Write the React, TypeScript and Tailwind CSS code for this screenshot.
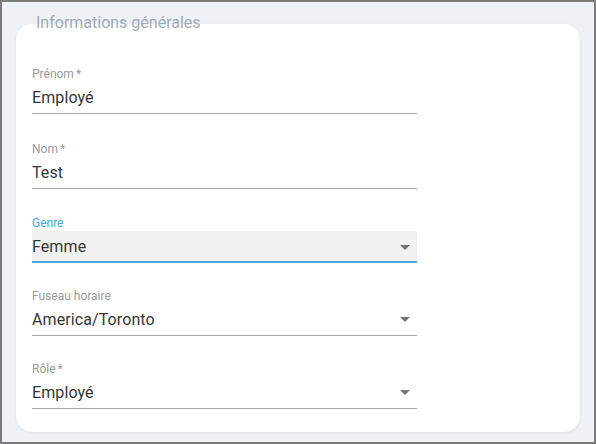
import { ReactNode } from "react";

function Arrow() {
  return (
    <svg width="10" height="5" viewBox="0 0 10 5" className="shrink-0">
      <path d="M0 0 L10 0 L5 5 Z" fill="#757575" />
    </svg>
  );
}

interface FieldProps {
  label: string;
  value: string;
  required?: boolean;
  select?: boolean;
  focused?: boolean;
  className?: string;
}

function Field({ label, value, required, select, focused, className }: FieldProps) {
  return (
    <div className={`w-[385px] ${className ?? ""}`}>
      <div
        className={`h-4 text-[12px] leading-4 ${
          focused ? "text-[#3fa9e5]" : "text-[#9a9a9a]"
        }`}
      >
        {label}
        {required && <span className="ml-[2px]">*</span>}
      </div>
      <div
        className={`flex h-[32px] items-center justify-between ${
          focused
            ? "border-b-2 border-[#45a8e2] bg-[#f1f1f1] pt-[2px]"
            : "border-b border-[#a8a8a8]"
        }`}
      >
        <span className="text-[16px] leading-5 tracking-[0.1px] text-[#363636]">{value}</span>
        {select && (
          <span className="mr-[7px]">
            <Arrow />
          </span>
        )}
      </div>
    </div>
  );
}

function Card({ title, children }: { title: string; children: ReactNode }) {
  return (
    <div className="relative h-full rounded-2xl bg-white pl-4 pt-[42px] shadow-[0_1px_3px_rgba(0,0,0,0.08)]">
      <div className="absolute left-5 top-[-11px] text-[16px] leading-5 text-[#a2acb8]">
        {title}
      </div>
      {children}
    </div>
  );
}

export default function App() {
  return (
    <div
      className="h-[444px] w-[596px] border-2 border-[#7b7b7b] bg-[#eef1f6] pb-[10px] pl-[14px] pr-[14px] pt-[22px]"
      style={{ fontFamily: "Roboto, 'Liberation Sans', sans-serif" }}
    >
      <Card title="Informations générales">
        <Field label="Prénom" value="Employé" required />
        <Field label="Nom" value="Test" required className="mt-[27px]" />
        <Field label="Genre" value="Femme" select focused className="mt-[26px]" />
        <Field label="Fuseau horaire" value="America/Toronto" select className="mt-[25px]" />
        <Field label="Rôle" value="Employé" required select className="mt-[25px]" />
      </Card>
    </div>
  );
}
